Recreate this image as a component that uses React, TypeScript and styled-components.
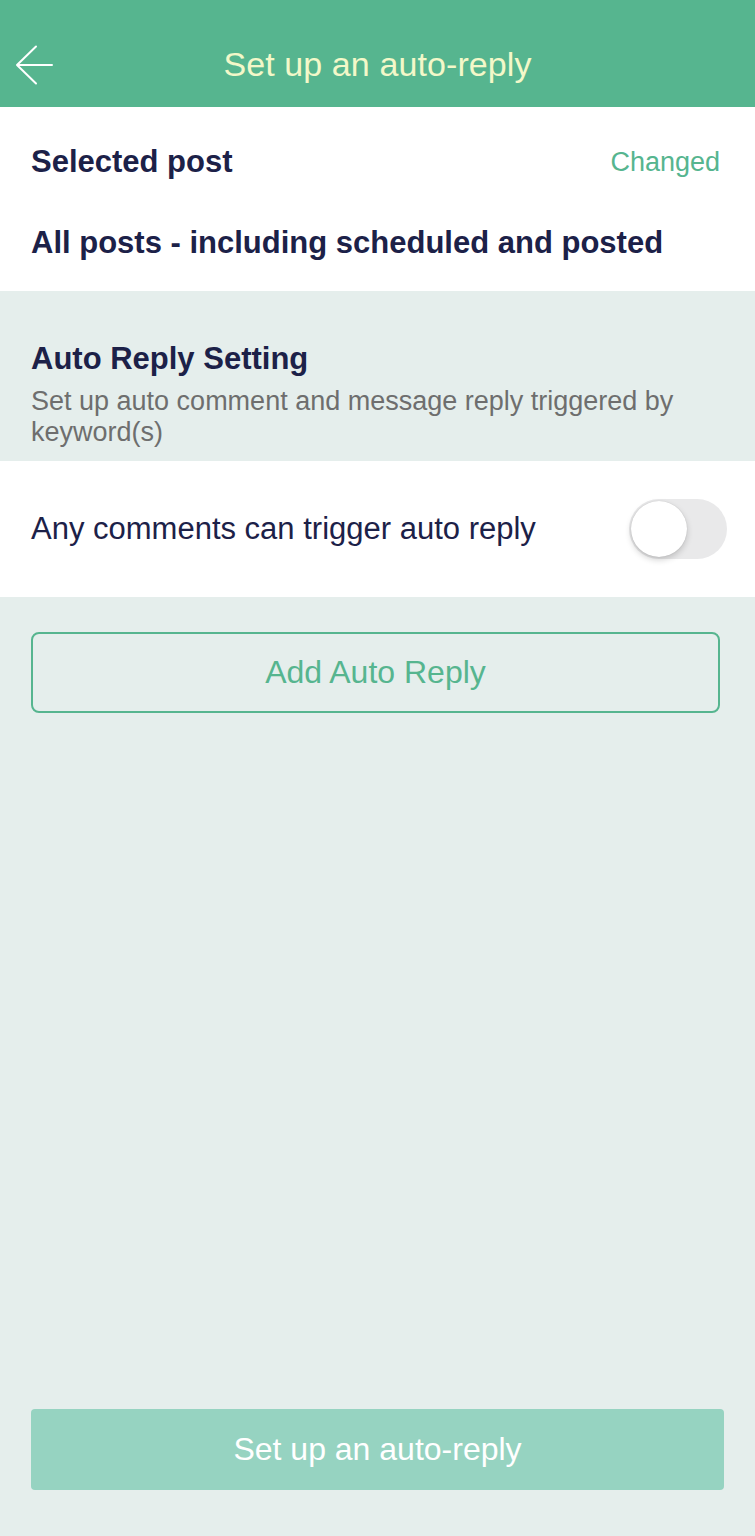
import React from 'react';
import styled, { createGlobalStyle } from 'styled-components';

const GlobalStyle = createGlobalStyle`
  html, body {
    margin: 0;
    padding: 0;
    background: #e5eeec;
  }
  body {
    font-family: 'Liberation Sans', Arial, sans-serif;
    -webkit-font-smoothing: antialiased;
  }
`;

const App = () => {
  return (
    <>
      <GlobalStyle />
      <Page>
        <Header>
          <BackButton aria-label='back'>
            <svg width='40' height='40' viewBox='0 0 40 40' fill='none'>
              <path d='M39 20H4M23 1.5L4 20L23 38.5' stroke='#fff' strokeWidth='2' strokeLinecap='round' strokeLinejoin='round' />
            </svg>
          </BackButton>
          <Title>Set up an auto-reply</Title>
        </Header>

        <WhiteSection>
          <Row>
            <Heading>Selected post</Heading>
            <LinkText>Changed</LinkText>
          </Row>
          <Heading>All posts - including scheduled and posted</Heading>
        </WhiteSection>

        <SettingHeader>
          <Heading>Auto Reply Setting</Heading>
          <Description>Set up auto comment and message reply triggered by keyword(s)</Description>
        </SettingHeader>

        <ToggleRow>
          <ToggleLabel>Any comments can trigger auto reply</ToggleLabel>
          <Switch>
            <Knob />
          </Switch>
        </ToggleRow>

        <Body>
          <OutlineButton>Add Auto Reply</OutlineButton>
        </Body>

        <Footer>
          <SubmitButton disabled>Set up an auto-reply</SubmitButton>
        </Footer>
      </Page>
    </>
  );
};

export default App;

const Page = styled.div`
  display: flex;
  flex-direction: column;
  min-height: 1536px;
  background: #e5eeec;
`;

const Header = styled.header`
  position: relative;
  height: 107px;
  background: #56b58f;
  display: flex;
  align-items: center;
  justify-content: center;
  padding-top: 22px;
  box-sizing: border-box;
`;

const BackButton = styled.button`
  position: absolute;
  left: 13px;
  top: 45px;
  padding: 0;
  border: 0;
  background: none;
  display: flex;
`;

const Title = styled.h1`
  margin: 0;
  font-size: 34px;
  font-weight: 400;
  color: #f3f8c9;
  letter-spacing: 0.1px;
`;

const WhiteSection = styled.section`
  background: #fff;
  padding: 37px 31px 0;
  height: 184px;
  box-sizing: border-box;
  display: flex;
  flex-direction: column;
  gap: 45px;
`;

const Row = styled.div`
  display: flex;
  justify-content: space-between;
  align-items: center;
`;

const Heading = styled.h2`
  margin: 0;
  font-size: 31px;
  font-weight: 700;
  color: #1c2148;
  line-height: 36px;
`;

const LinkText = styled.span`
  font-size: 27px;
  color: #56b58f;
  margin-right: 4px;
`;

const SettingHeader = styled.section`
  padding: 50px 31px 13px;
  display: flex;
  flex-direction: column;
  gap: 9px;
`;

const Description = styled.p`
  margin: 0;
  font-size: 27px;
  line-height: 31px;
  color: #6e6e6e;
`;

const ToggleRow = styled.div`
  background: #fff;
  height: 136px;
  padding: 0 28px 0 31px;
  box-sizing: border-box;
  display: flex;
  align-items: center;
  justify-content: space-between;
`;

const ToggleLabel = styled.span`
  font-size: 31px;
  color: #1c2148;
`;

const Switch = styled.div`
  width: 98px;
  height: 60px;
  border-radius: 30px;
  background: #e9e9ea;
  position: relative;
`;

const Knob = styled.div`
  position: absolute;
  left: 2px;
  top: 2px;
  width: 56px;
  height: 56px;
  border-radius: 50%;
  background: #fff;
  box-shadow: 0 3px 6px rgba(0, 0, 0, 0.18), 0 0 1px rgba(0, 0, 0, 0.2);
`;

const Body = styled.div`
  flex: 1;
  padding: 35px 35px 0 31px;
`;

const OutlineButton = styled.button`
  width: 100%;
  height: 81px;
  border: 2px solid #56b58f;
  border-radius: 8px;
  background: transparent;
  font-family: inherit;
  font-size: 32px;
  color: #56b58f;
`;

const Footer = styled.div`
  padding: 0 31px 46px;
`;

const SubmitButton = styled.button`
  width: 100%;
  height: 81px;
  border: 0;
  border-radius: 4px;
  background: #96d3c1;
  font-family: inherit;
  font-size: 32px;
  color: #fff;
`;
